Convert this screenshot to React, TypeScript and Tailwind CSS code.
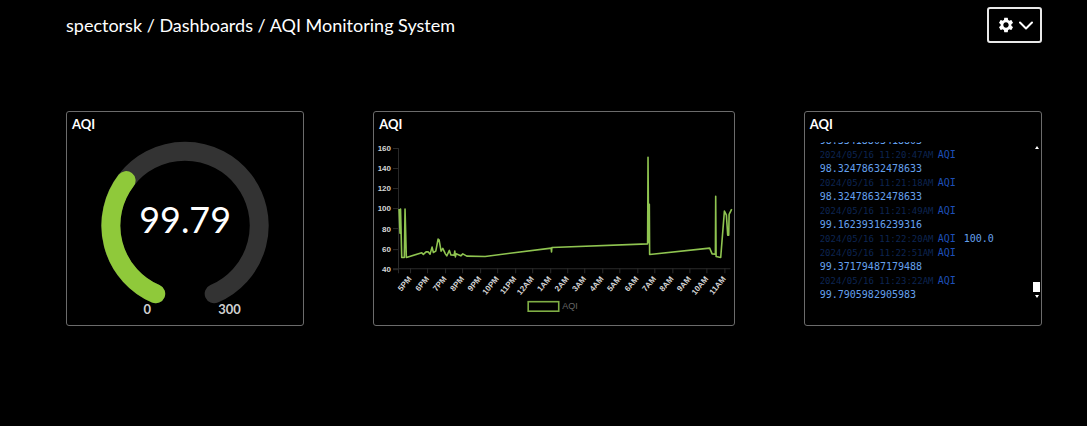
import type { ReactNode } from "react";
import { MdSettings } from "react-icons/md";

const yTicks = [160, 140, 120, 100, 80, 60, 40];

const hours = [
  "5PM", "6PM", "7PM", "8PM", "9PM", "10PM", "11PM", "12AM", "1AM", "2AM",
  "3AM", "4AM", "5AM", "6AM", "7AM", "8AM", "9AM", "10AM", "11AM",
];

const line =
  "25,73 26,97 26.5,73 27.7,121.3 30.3,121.3 31,73 32.3,121.3 47.7,116.7 49.3,118.3 52,115.7 54,115.7 56,118 58,111 59.3,116.3 61.7,115 64,103 65,103.7 67,115 68.7,112.3 71.3,117.7 72.7,119.7 75.3,114.3 76.7,118.7 80,119 80.7,115 81.3,120.7 82,117.7 86.7,119.7 88.7,117.7 92.7,120 111,120.3 177,112 177.3,115.7 177.7,111.3 273.3,107.7 273.7,21.3 274.3,106 275,68.3 275.3,118.3 335.3,112 337.7,117.7 341,118 341.3,60.3 341.7,120.3 346.3,121.3 350,75 352,79 353.3,99 354.3,99 354.7,78.3 357.3,73";

const log = [
  { time: "", value: "98.33418803418803" },
  { time: "2024/05/16 11:20:47AM", value: "98.32478632478633" },
  { time: "2024/05/16 11:21:18AM", value: "98.32478632478633" },
  { time: "2024/05/16 11:21:49AM", value: "99.16239316239316" },
  { time: "2024/05/16 11:22:20AM", value: "100.0" },
  { time: "2024/05/16 11:22:51AM", value: "99.37179487179488" },
  { time: "2024/05/16 11:23:22AM", value: "99.7905982905983" },
];

function Card({ title, children }: { title: string; children: ReactNode }) {
  return (
    <section className="flex min-w-0 flex-col rounded-[3px] border border-[#6b6b6b]">
      <h2 className="h-6 px-[5px] text-[13px] leading-6 font-bold text-white">{title}</h2>
      {children}
    </section>
  );
}

function Gauge() {
  return (
    <svg viewBox="0 0 237 189" className="block w-full font-[Lato,sans-serif]" role="img" aria-label="AQI gauge">
      <g fill="none" strokeWidth="19" strokeLinecap="round">
        <path d="M89 158.3 A74.5 74.5 0 1 1 147.6 158.3" stroke="#333333" />
        <path d="M89 158.3 A74.5 74.5 0 0 1 59.3 44.7" stroke="#8fc93a" />
      </g>
      <text x="118.5" y="97" textAnchor="middle" fill="#ffffff" className="text-[36px]">99.79</text>
      <g textAnchor="middle" fill="#d0d0d0" className="text-[13px] font-bold">
        <text x="80.5" y="179">0</text>
        <text x="163" y="179">300</text>
      </g>
    </svg>
  );
}

function LineChart() {
  return (
    <svg viewBox="0 0 359 189" className="block w-full font-['Liberation_Sans',sans-serif]" role="img" aria-label="AQI over time">
      <g stroke="#2b2b2b" strokeWidth="1">
        <path d="M24.5 12V137M19 132.5H356" />
        {yTicks.map((t, i) => (
          <path key={t} d={`M19 ${Math.round(12 + i * 20.1)}.5H24`} />
        ))}
        {hours.map((h, i) => (
          <path key={h} d={`M${Math.round(36 + i * 17.44)}.5 132V137`} />
        ))}
      </g>
      <g fill="#d6d6d6" textAnchor="end" className="text-[8px] font-bold">
        {yTicks.map((t, i) => (
          <text key={t} x="17" y={15 + i * 20.1}>{t}</text>
        ))}
        {hours.map((h, i) => (
          <text key={h} transform={`translate(${38 + i * 17.44} 143) rotate(-50)`}>{h}</text>
        ))}
      </g>
      <polyline points={line} fill="none" stroke="#8fc450" strokeWidth="1.6" strokeLinejoin="round" />
      <rect x="154" y="165.5" width="30.5" height="9.5" fill="none" stroke="#7fae45" strokeWidth="1.6" />
      <text x="188" y="173" fill="#666666" className="text-[9px]">AQI</text>
    </svg>
  );
}

function LogStream() {
  return (
    <div className="mt-[6px] flex h-[160px] pl-[15px]">
      <div className="flex min-w-0 flex-1 flex-col justify-end overflow-hidden font-['DejaVu_Sans_Mono',monospace] text-[10px] leading-[14px]">
        {log.map((row, i) => (
          <div key={i} className="flex shrink-0 flex-wrap gap-x-2">
            {row.time && (
              <>
                <span className="w-[110px] text-[9px] whitespace-nowrap text-[#0d2552]">{row.time}</span>
                <span className="text-[#1d4fb8]">AQI</span>
              </>
            )}
            <span className="text-[#64a0ee]">{row.value}</span>
          </div>
        ))}
      </div>
      <div className="flex w-2 flex-col items-center pt-1 pb-1" aria-hidden="true">
        <svg viewBox="0 0 4 3" className="h-[3px] w-1 fill-white"><path d="M0 3 2 0 4 3z" /></svg>
        <div className="flex-1" />
        <div className="mb-[3px] h-[10px] w-[7px] bg-white" />
        <svg viewBox="0 0 4 3" className="h-[3px] w-1 fill-white"><path d="M0 0 2 3 4 0z" /></svg>
      </div>
    </div>
  );
}

export default function App() {
  return (
    <div className="min-h-screen bg-black pt-[7px] pr-[45px] pb-12 pl-[66px] font-[Lato,sans-serif] text-white">
      <header className="flex items-center justify-between">
        <h1 className="text-[18px] leading-6">spectorsk / Dashboards / AQI Monitoring System</h1>
        <button
          type="button"
          aria-label="Dashboard settings"
          className="flex h-9 w-[55px] items-center justify-center gap-1 rounded-[3px] border-2 border-[#e8e8e8]"
        >
          <MdSettings className="size-[18px]" />
          <svg viewBox="0 0 14 9" className="h-[9px] w-[14px]" fill="none" stroke="currentColor" strokeWidth="2" strokeLinecap="round" strokeLinejoin="round" aria-hidden="true">
            <path d="M1 1.5 7 7.5 13 1.5" />
          </svg>
        </button>
      </header>
      <main className="mt-[68px] grid grid-cols-[238fr_361fr_238fr] gap-x-[69px]">
        <Card title="AQI"><Gauge /></Card>
        <Card title="AQI"><LineChart /></Card>
        <Card title="AQI"><LogStream /></Card>
      </main>
    </div>
  );
}
